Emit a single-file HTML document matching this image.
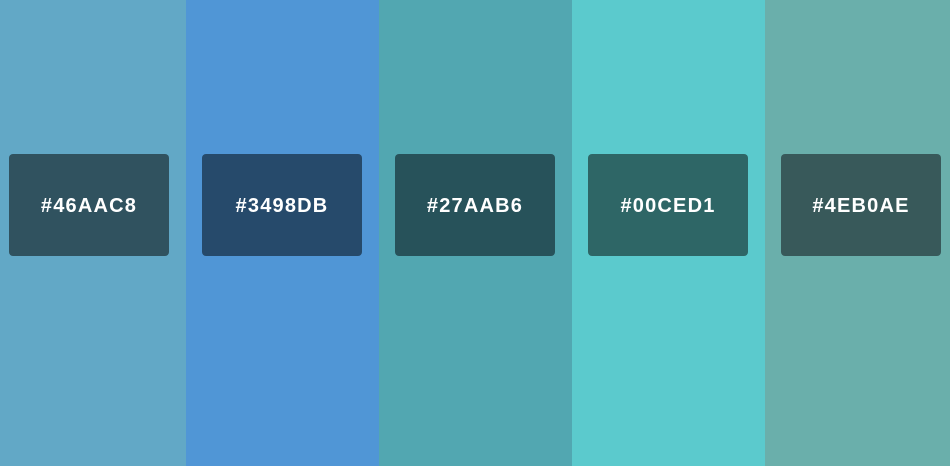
<!DOCTYPE html>
<html><head><style>
html,body{margin:0;padding:0;width:950px;height:466px;overflow:hidden}
.c{position:absolute;top:0;height:466px}
.b{position:absolute;top:154px;height:102px;width:160px;border-radius:4px;color:#fff;font:bold 20px "Liberation Sans",sans-serif;letter-spacing:1.2px;display:flex;align-items:center;justify-content:center;box-sizing:border-box;padding-top:3px}
</style></head><body>
<div class="c" style="left:0;width:186px;background:#62a8c6"><div class="b" style="left:9px;background:#30525f">#46AAC8</div></div>
<div class="c" style="left:186px;width:193px;background:#5096d6"><div class="b" style="left:16px;background:#264a6b">#3498DB</div></div>
<div class="c" style="left:379px;width:193px;background:#52a7b1"><div class="b" style="left:16px;background:#27525a">#27AAB6</div></div>
<div class="c" style="left:572px;width:193px;background:#5bcacd"><div class="b" style="left:16px;background:#2e6666">#00CED1</div></div>
<div class="c" style="left:765px;width:185px;background:#6aafab"><div class="b" style="left:16px;background:#38595a">#4EB0AE</div></div>
</body></html>
